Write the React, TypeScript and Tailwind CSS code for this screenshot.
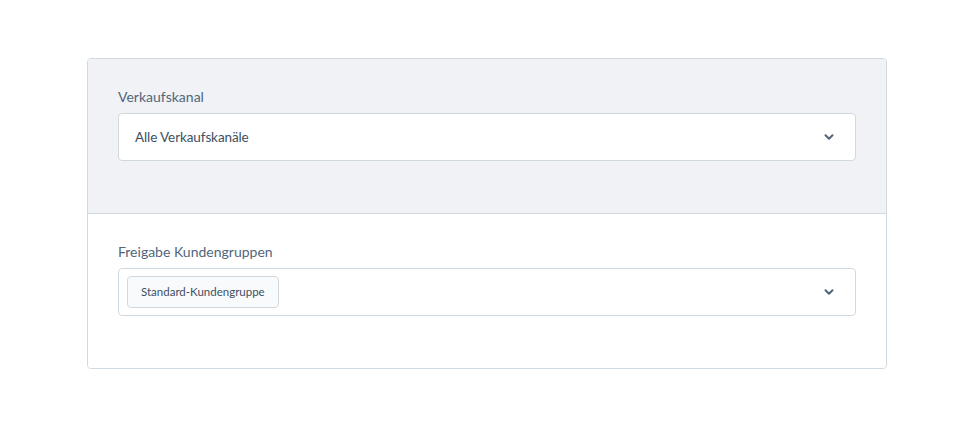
import { ChevronDown } from 'lucide-react';

function Field({ label, children }: { label: string; children: React.ReactNode }) {
  return (
    <div className="mb-[22px]">
      <label className="block text-[14px] leading-4 text-[#52667a] mb-2">{label}</label>
      <div className="flex h-12 items-center justify-between rounded border border-[#d1d9e0] bg-white pl-4 pr-[19px]">
        {children}
        <ChevronDown className="h-[14px] w-[14px] text-[#52667a]" strokeWidth={3.5} />
      </div>
    </div>
  );
}

export default function App() {
  return (
    <div className="min-h-screen bg-white pt-[58px]" style={{ fontFamily: 'Lato, "Open Sans", sans-serif' }}>
      <div className="mx-auto w-[800px] overflow-hidden rounded border border-[#d1d9e0]">
        <div className="border-b border-[#d1d9e0] bg-[#f0f2f6] p-[30px]">
          <Field label="Verkaufskanal">
            <span className="text-[13.5px] text-[#3d4f61] tracking-[-0.1px]">Alle Verkaufskanäle</span>
          </Field>
        </div>
        <div className="bg-white p-[30px]">
          <Field label="Freigabe Kundengruppen">
            <span className="-ml-2 flex h-8 items-center rounded-sm border border-[#d1d9e0] bg-[#f9fafb] px-[13px] text-[11.5px] text-[#3d4f61]">
              Standard-Kundengruppe
            </span>
          </Field>
        </div>
      </div>
    </div>
  );
}
